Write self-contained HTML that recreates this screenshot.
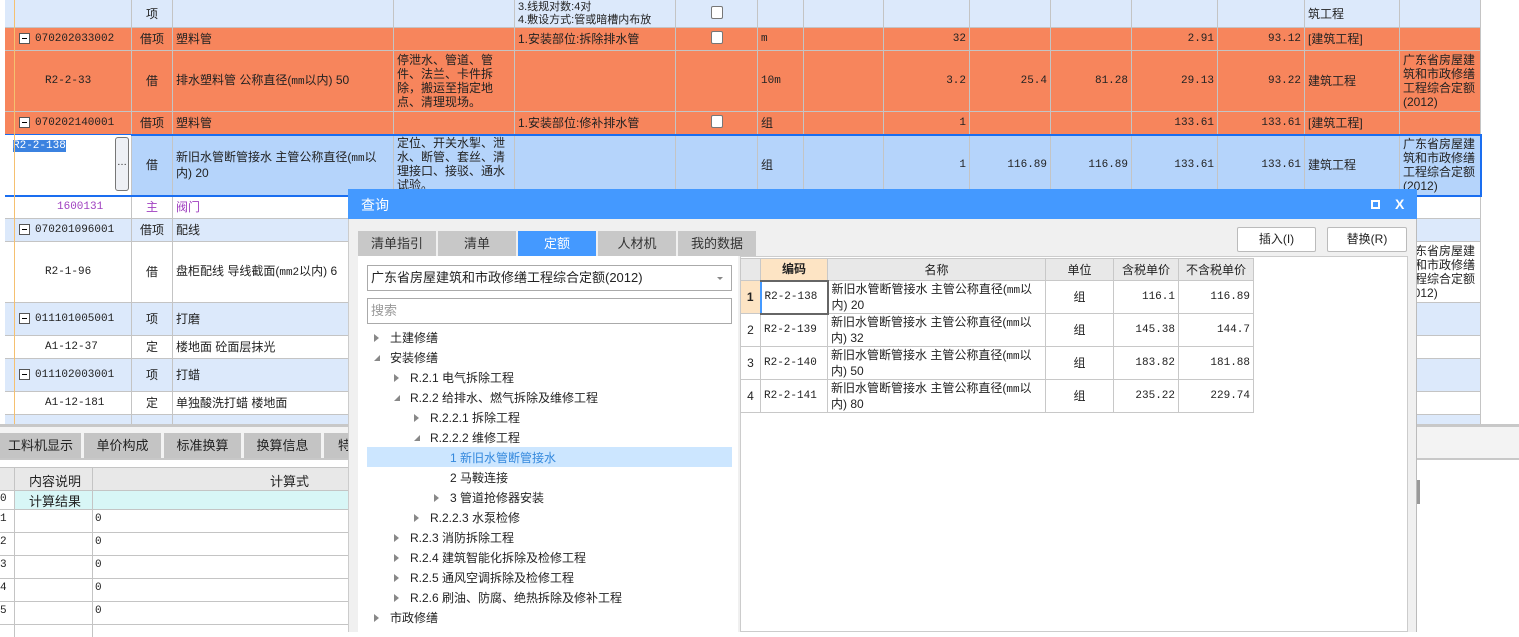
<!DOCTYPE html>
<html><head><meta charset="utf-8"><style>
*{box-sizing:border-box;margin:0;padding:0}
body{width:1519px;height:632px;overflow:hidden;background:#fff;position:relative;font-family:"Liberation Sans","Noto Sans CJK SC",sans-serif;font-size:12px;color:#222}
.a{position:absolute}
table{border-collapse:collapse;table-layout:fixed}
#g td{border:1px solid #c4c4c4;padding:0 3px;overflow:hidden;vertical-align:middle;line-height:14px;white-space:nowrap}
#g td.w{white-space:normal}
.or td{background:#f7855c}
.lb td{background:#dce9fb}
.wh td{background:#fff}
.se td{background:#b5d4fb}
.r{text-align:right}.c{text-align:center}
.mono{font-family:"Liberation Mono","Noto Sans CJK SC",monospace;font-size:11px}
.box{display:inline-block;width:11px;height:11px;border:1px solid #555;background:#fff;vertical-align:middle;margin-right:5px;position:relative}
.box:after{content:"";position:absolute;left:2px;right:2px;top:4px;height:1px;background:#000}
.cb{display:inline-block;width:12px;height:13px;border:1px solid #777;background:#fff;border-radius:2px}
.tab{position:absolute;top:231px;height:25px;width:78px;background:#c8c8c8;text-align:center;line-height:25px;font-size:13px;color:#333}
.tr{position:absolute;height:20px;line-height:20px;font-size:12px;color:#222;white-space:nowrap}
.tri{position:absolute;width:0;height:0;border-top:4px solid transparent;border-bottom:4px solid transparent;border-left:5px solid #888;top:6px}
.trd{position:absolute;width:0;height:0;border-left:6px solid transparent;border-bottom:6px solid #888;top:7px}
#q td{border:1px solid #c8c8c8;padding:0 3px;line-height:14px;overflow:hidden}
</style></head><body>
<table id="g" class="a" style="left:0;top:-1px;width:1481px">
<colgroup><col style="width:131px"><col style="width:41px"><col style="width:221px"><col style="width:121px"><col style="width:161px"><col style="width:82px"><col style="width:46px"><col style="width:80px"><col style="width:86px"><col style="width:81px"><col style="width:81px"><col style="width:86px"><col style="width:87px"><col style="width:95px"><col style="width:81px"></colgroup>
<tr class="lb" style="height:28px"><td></td><td class="c">项</td><td></td><td></td><td class="w" style="font-size:11px;line-height:13px;vertical-align:bottom">3.线规对数:4对<br>4.敷设方式:管或暗槽内布放</td><td class="c"><span class="cb"></span></td><td></td><td></td><td></td><td></td><td></td><td></td><td></td><td>筑工程</td><td></td></tr>
<tr class="or" style="height:23px"><td style="padding-left:18px" class="mono"><span class="box"></span>070202033002</td><td class="c">借项</td><td>塑料管</td><td></td><td>1.安装部位:拆除排水管</td><td class="c"><span class="cb"></span></td><td class="mono">m</td><td></td><td class="r mono">32</td><td></td><td></td><td class="r mono">2.91</td><td class="r mono">93.12</td><td>[建筑工程]</td><td></td></tr>
<tr class="or" style="height:61px"><td class="mono" style="padding-left:44px">R2-2-33</td><td class="c">借</td><td>排水塑料管 公称直径(<span class="mono">mm</span>以内) 50</td><td class="w">停泄水、管道、管件、法兰、卡件拆除，搬运至指定地点、清理现场。</td><td></td><td></td><td class="mono">10m</td><td></td><td class="r mono">3.2</td><td class="r mono">25.4</td><td class="r mono">81.28</td><td class="r mono">29.13</td><td class="r mono">93.22</td><td>建筑工程</td><td class="w">广东省房屋建筑和市政修缮工程综合定额(2012)</td></tr>
<tr class="or" style="height:23px"><td style="padding-left:18px" class="mono"><span class="box"></span>070202140001</td><td class="c">借项</td><td>塑料管</td><td></td><td>1.安装部位:修补排水管</td><td class="c"><span class="cb"></span></td><td>组</td><td></td><td class="r mono">1</td><td></td><td></td><td class="r mono">133.61</td><td class="r mono">133.61</td><td>[建筑工程]</td><td></td></tr>
<tr class="se" style="height:61px;outline:2px solid #1a6ef0;outline-offset:-1px"><td style="background:#fff;vertical-align:top;padding:2px 0 0 12px;position:relative"><span class="mono" style="background:#3b82e0;color:#fff">R2-2-138</span><span class="a" style="left:114px;top:2px;width:14px;height:54px;border:1px solid #777;border-radius:3px;background:#eef0f5;text-align:center;line-height:50px;font-size:10px">…</span></td><td class="c">借</td><td class="w">新旧水管断管接水 主管公称直径(<span class="mono">mm</span>以内) 20</td><td class="w" style="vertical-align:top;padding-top:1px">定位、开关水掣、泄水、断管、套丝、清理接口、接驳、通水试验。</td><td></td><td></td><td>组</td><td></td><td class="r mono">1</td><td class="r mono">116.89</td><td class="r mono">116.89</td><td class="r mono">133.61</td><td class="r mono">133.61</td><td>建筑工程</td><td class="w">广东省房屋建筑和市政修缮工程综合定额(2012)</td></tr>
<tr class="wh" style="height:23px"><td class="mono" style="padding-left:56px;color:#a040c0">1600131</td><td class="c" style="color:#a040c0">主</td><td style="color:#a040c0">阀门</td><td></td><td></td><td></td><td></td><td></td><td></td><td></td><td></td><td></td><td></td><td></td><td></td></tr>
<tr class="lb" style="height:23px"><td style="padding-left:18px" class="mono"><span class="box"></span>070201096001</td><td class="c">借项</td><td>配线</td><td></td><td></td><td></td><td></td><td></td><td></td><td></td><td></td><td></td><td></td><td></td><td></td></tr>
<tr class="wh" style="height:61px"><td class="mono" style="padding-left:44px">R2-1-96</td><td class="c">借</td><td>盘柜配线 导线截面(<span class="mono">mm2</span>以内) 6</td><td></td><td></td><td></td><td></td><td></td><td></td><td></td><td></td><td></td><td></td><td></td><td class="w">广东省房屋建筑和市政修缮工程综合定额(2012)</td></tr>
<tr class="lb" style="height:33px"><td style="padding-left:18px" class="mono"><span class="box"></span>011101005001</td><td class="c">项</td><td>打磨</td><td></td><td></td><td></td><td></td><td></td><td></td><td></td><td></td><td></td><td></td><td></td><td></td></tr>
<tr class="wh" style="height:23px"><td class="mono" style="padding-left:44px">A1-12-37</td><td class="c">定</td><td>楼地面 砼面层抹光</td><td></td><td></td><td></td><td></td><td></td><td></td><td></td><td></td><td></td><td></td><td></td><td></td></tr>
<tr class="lb" style="height:33px"><td style="padding-left:18px" class="mono"><span class="box"></span>011102003001</td><td class="c">项</td><td>打蜡</td><td></td><td></td><td></td><td></td><td></td><td></td><td></td><td></td><td></td><td></td><td></td><td></td></tr>
<tr class="wh" style="height:23px"><td class="mono" style="padding-left:44px">A1-12-181</td><td class="c">定</td><td>单独酸洗打蜡 楼地面</td><td></td><td></td><td></td><td></td><td></td><td></td><td></td><td></td><td></td><td></td><td></td><td></td></tr>
<tr class="lb" style="height:12px"><td></td><td></td><td></td><td></td><td></td><td></td><td></td><td></td><td></td><td></td><td></td><td></td><td></td><td></td><td></td></tr>
</table>
<div class="a" style="left:14px;top:0;width:1px;height:425px;background:#f5c070"></div>
<div class="a" style="left:0;top:0;width:5px;height:425px;background:#fff"></div>
<div class="a" style="left:0;top:424px;width:1519px;height:3px;background:#c8c8c8"></div>
<div class="a" style="left:0;top:427px;width:1519px;height:33px;background:#f3f3f3"></div>
<div class="a" style="left:0;top:433px;width:81px;height:25px;background:#c4c4c4;line-height:25px;text-align:center;font-size:13px">工料机显示</div>
<div class="a" style="left:84px;top:433px;width:77px;height:25px;background:#c4c4c4;line-height:25px;text-align:center;font-size:13px">单价构成</div>
<div class="a" style="left:164px;top:433px;width:77px;height:25px;background:#c4c4c4;line-height:25px;text-align:center;font-size:13px">标准换算</div>
<div class="a" style="left:244px;top:433px;width:77px;height:25px;background:#c4c4c4;line-height:25px;text-align:center;font-size:13px">换算信息</div>
<div class="a" style="left:324px;top:433px;width:30px;height:25px;background:#c4c4c4;line-height:25px;padding-left:14px;font-size:13px">特</div>
<div class="a" style="left:0;top:458px;width:1519px;height:2px;background:#c8c8c8"></div>
<div class="a" style="left:0;top:467px;width:360px;height:24px;background:#e8e8e8;border-top:1px solid #c4c4c4;border-bottom:1px solid #c4c4c4"></div>
<div class="a" style="left:14px;top:467px;width:1px;height:170px;background:#c4c4c4"></div>
<div class="a" style="left:92px;top:467px;width:1px;height:170px;background:#c4c4c4"></div>
<div class="a" style="left:29px;top:471px;font-size:13px">内容说明</div>
<div class="a" style="left:270px;top:471px;font-size:13px">计算式</div>
<div class="a" style="left:15px;top:491px;width:77px;height:18px;background:#d8f6f6"></div>
<div class="a" style="left:93px;top:491px;width:270px;height:18px;background:#d8f6f6"></div>
<div class="a" style="left:29px;top:491px;font-size:13px">计算结果</div>
<div class="a mono" style="left:0;top:493px">0</div>
<div class="a mono" style="left:0;top:513px">1</div><div class="a mono" style="left:95px;top:513px">0</div>
<div class="a mono" style="left:0;top:536px">2</div><div class="a mono" style="left:95px;top:536px">0</div>
<div class="a mono" style="left:0;top:559px">3</div><div class="a mono" style="left:95px;top:559px">0</div>
<div class="a mono" style="left:0;top:582px">4</div><div class="a mono" style="left:95px;top:582px">0</div>
<div class="a mono" style="left:0;top:605px">5</div><div class="a mono" style="left:95px;top:605px">0</div>
<div class="a" style="left:0;top:509px;width:360px;height:1px;background:#c4c4c4"></div>
<div class="a" style="left:0;top:532px;width:360px;height:1px;background:#c4c4c4"></div>
<div class="a" style="left:0;top:555px;width:360px;height:1px;background:#c4c4c4"></div>
<div class="a" style="left:0;top:578px;width:360px;height:1px;background:#c4c4c4"></div>
<div class="a" style="left:0;top:601px;width:360px;height:1px;background:#c4c4c4"></div>
<div class="a" style="left:0;top:624px;width:360px;height:1px;background:#c4c4c4"></div>
<div class="a" style="left:1417px;top:480px;width:3px;height:24px;background:#999"></div>
<div class="a" style="left:348px;top:189px;width:1069px;height:443px;background:#f0f0f0;border-left:1px solid #ccc;border-right:1px solid #bbb"></div>
<div class="a" style="left:348px;top:189px;width:1069px;height:30px;background:#4499ff;color:#fff;font-size:14px;line-height:32px;padding-left:13px">查询</div>
<div class="a" style="left:1371px;top:200px;width:9px;height:9px;border:2px solid #fff"></div>
<div class="a" style="left:1395px;top:193px;color:#fff;font-size:14px;font-weight:bold;line-height:22px">X</div>
<div class="tab" style="left:358px">清单指引</div>
<div class="tab" style="left:438px">清单</div>
<div class="tab" style="left:518px;background:#4499ff;color:#fff">定额</div>
<div class="tab" style="left:598px">人材机</div>
<div class="tab" style="left:678px">我的数据</div>
<div class="a" style="left:358px;top:256px;width:380px;height:376px;background:#fff"></div>
<div class="a" style="left:367px;top:265px;width:365px;height:26px;border:1px solid #aaa;background:#fff;line-height:24px;padding-left:3px;font-size:13px">广东省房屋建筑和市政修缮工程综合定额(2012)<span class="a" style="right:8px;top:11px;border-left:3px solid transparent;border-right:3px solid transparent;border-top:3px solid #888"></span></div>
<div class="a" style="left:367px;top:298px;width:365px;height:26px;border:1px solid #aaa;background:#fff;line-height:24px;padding-left:3px;font-size:13px;color:#999">搜索</div>
<div class="a" style="left:367px;top:447px;width:365px;height:20px;background:#cce6ff"></div>
<div class="tr" style="left:374px;top:328px"><span class="tri" style="left:0"></span><span style="margin-left:16px">土建修缮</span></div>
<div class="tr" style="left:374px;top:348px"><span class="trd" style="left:0"></span><span style="margin-left:16px">安装修缮</span></div>
<div class="tr" style="left:394px;top:368px"><span class="tri" style="left:0"></span><span style="margin-left:16px">R.2.1 电气拆除工程</span></div>
<div class="tr" style="left:394px;top:388px"><span class="trd" style="left:0"></span><span style="margin-left:16px">R.2.2 给排水、燃气拆除及维修工程</span></div>
<div class="tr" style="left:414px;top:408px"><span class="tri" style="left:0"></span><span style="margin-left:16px">R.2.2.1 拆除工程</span></div>
<div class="tr" style="left:414px;top:428px"><span class="trd" style="left:0"></span><span style="margin-left:16px">R.2.2.2 维修工程</span></div>
<div class="tr" style="left:450px;top:448px;color:#3388dd">1 新旧水管断管接水</div>
<div class="tr" style="left:450px;top:468px">2 马鞍连接</div>
<div class="tr" style="left:434px;top:488px"><span class="tri" style="left:0"></span><span style="margin-left:16px">3 管道抢修器安装</span></div>
<div class="tr" style="left:414px;top:508px"><span class="tri" style="left:0"></span><span style="margin-left:16px">R.2.2.3 水泵检修</span></div>
<div class="tr" style="left:394px;top:528px"><span class="tri" style="left:0"></span><span style="margin-left:16px">R.2.3 消防拆除工程</span></div>
<div class="tr" style="left:394px;top:548px"><span class="tri" style="left:0"></span><span style="margin-left:16px">R.2.4 建筑智能化拆除及检修工程</span></div>
<div class="tr" style="left:394px;top:568px"><span class="tri" style="left:0"></span><span style="margin-left:16px">R.2.5 通风空调拆除及检修工程</span></div>
<div class="tr" style="left:394px;top:588px"><span class="tri" style="left:0"></span><span style="margin-left:16px">R.2.6 刷油、防腐、绝热拆除及修补工程</span></div>
<div class="tr" style="left:374px;top:608px"><span class="tri" style="left:0"></span><span style="margin-left:16px">市政修缮</span></div>
<div class="a" style="left:1237px;top:227px;width:79px;height:25px;border:1px solid #bbb;border-radius:2px;background:#fff;text-align:center;line-height:23px;font-size:12px">插入(I)</div>
<div class="a" style="left:1327px;top:227px;width:80px;height:25px;border:1px solid #bbb;border-radius:2px;background:#fff;text-align:center;line-height:23px;font-size:12px">替换(R)</div>
<div class="a" style="left:740px;top:256px;width:668px;height:376px;background:#fff;border:1px solid #ccc"></div>
<table id="q" class="a" style="left:740px;top:258px;width:513px">
<colgroup><col style="width:20px"><col style="width:67px"><col style="width:218px"><col style="width:68px"><col style="width:65px"><col style="width:75px"></colgroup>
<tr style="height:22px;background:#e8e8e8;text-align:center"><td></td><td style="background:#fde4c4;font-weight:bold">编码</td><td>名称</td><td>单位</td><td>含税单价</td><td>不含税单价</td></tr>
<tr style="height:33px"><td style="background:#fde4c4;text-align:center;font-weight:bold">1</td><td class="mono" style="border:2px solid #666;border-left:2px solid #4499ff">R2-2-138</td><td>新旧水管断管接水 主管公称直径(<span class="mono">mm</span>以内) 20</td><td class="c">组</td><td class="r mono">116.1</td><td class="r mono">116.89</td></tr>
<tr style="height:33px"><td class="c">2</td><td class="mono">R2-2-139</td><td>新旧水管断管接水 主管公称直径(<span class="mono">mm</span>以内) 32</td><td class="c">组</td><td class="r mono">145.38</td><td class="r mono">144.7</td></tr>
<tr style="height:33px"><td class="c">3</td><td class="mono">R2-2-140</td><td>新旧水管断管接水 主管公称直径(<span class="mono">mm</span>以内) 50</td><td class="c">组</td><td class="r mono">183.82</td><td class="r mono">181.88</td></tr>
<tr style="height:33px"><td class="c">4</td><td class="mono">R2-2-141</td><td>新旧水管断管接水 主管公称直径(<span class="mono">mm</span>以内) 80</td><td class="c">组</td><td class="r mono">235.22</td><td class="r mono">229.74</td></tr>
</table>
</body></html>
